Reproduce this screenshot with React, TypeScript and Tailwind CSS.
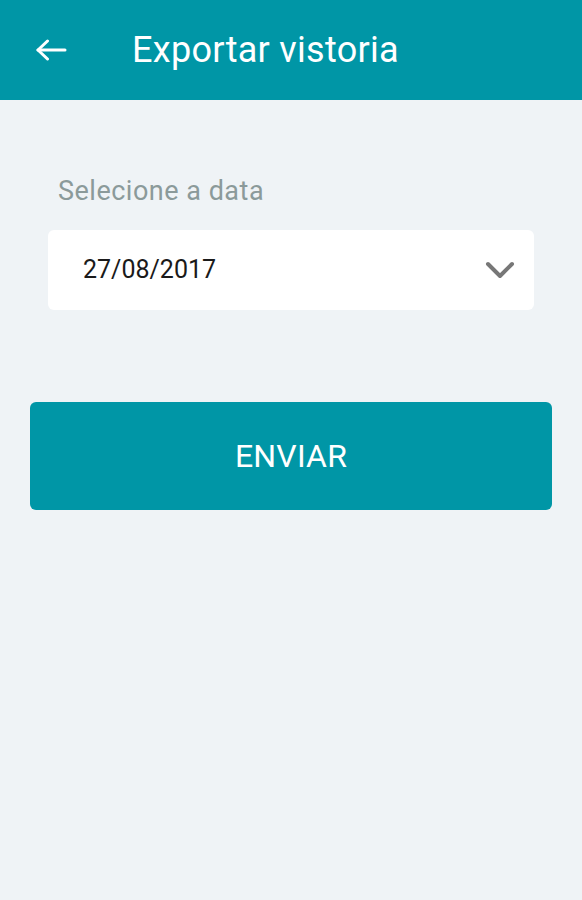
export default function App() {
  return (
    <div className="flex min-h-[900px] w-full flex-col bg-[#eff3f6] font-['Roboto',sans-serif]">
      <header className="flex h-[100px] items-center bg-[#0096a6] text-white">
        <button className="ml-[36px] flex h-[22px] w-[31px] items-center">
          <svg width="31" height="22" viewBox="0 0 31 22" fill="none" stroke="currentColor" strokeWidth="3" strokeLinecap="round" strokeLinejoin="round">
            <path d="M2 11 H29" />
            <path d="M11.5 2 L2 11 L11.5 20" />
          </svg>
        </button>
        <h1 className="ml-[65px] text-[36px] font-normal leading-none tracking-[0.3px]">
          Exportar vistoria
        </h1>
      </header>

      <main className="flex flex-col px-[30px] pt-[78px]">
        <div className="px-[18px]">
          <p className="pl-[10px] text-[27px] leading-none tracking-[0.5px] text-[#8b9a9a]">Selecione a data</p>
          <div className="mt-[25px] flex h-[80px] items-center justify-between rounded-md bg-white pl-[35px] pr-[19px]">
            <span className="text-[25px] text-[#1a1a1a]">27/08/2017</span>
            <svg width="30" height="18" viewBox="0 0 30 18" fill="none" stroke="#777777" strokeWidth="4" strokeLinecap="round" strokeLinejoin="round">
              <path d="M3 3 L15 15 L27 3" />
            </svg>
          </div>
        </div>

        <button className="mt-[92px] flex h-[108px] w-full items-center justify-center rounded-md bg-[#0096a6] text-[32px] tracking-[0.2px] text-white">
          ENVIAR
        </button>
      </main>
    </div>
  );
}
